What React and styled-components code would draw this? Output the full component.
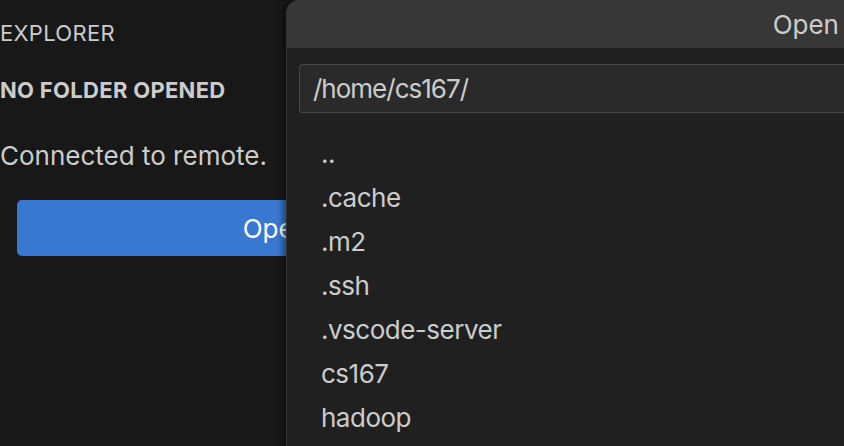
import React from 'react'
import styled, { createGlobalStyle } from 'styled-components'

const Global = createGlobalStyle`
html, body {
  margin: 0;
  padding: 0;
  background: #181818;
  font-family: Inter, "Noto Sans", "Liberation Sans", sans-serif;
}
#root {
  width: 844px;
  height: 446px;
  overflow: hidden;
}
`

const Screen = styled.div`
position: relative;
width: 844px;
height: 446px;
overflow: hidden;
background: #181818;
color: #cccccc;
`

const Sidebar = styled.div`
width: 636px;
display: flex;
flex-direction: column;
`

const PaneTitle = styled.div`
height: 66px;
display: flex;
align-items: center;
font-size: 22px;
letter-spacing: 0.3px;
color: #cccccc;
`

const SectionHeader = styled.div`
height: 48px;
display: flex;
align-items: center;
font-size: 22px;
font-weight: 700;
letter-spacing: 0.3px;
color: #cccccc;
`

const Message = styled.p`
margin: 24px 0 0 0;
font-size: 26px;
line-height: 36px;
color: #cccccc;
`

const PrimaryButton = styled.button`
margin: 26px 17px 0 17px;
height: 56px;
border: none;
border-radius: 5px;
background: #3878d0;
color: #ffffff;
font-family: inherit;
font-size: 26px;
`

const QuickInput = styled.div`
position: absolute;
top: 0;
left: 286px;
width: 1122px;
height: 520px;
background: #202020;
border: 1px solid #343434;
border-radius: 12px 12px 0 0;
box-shadow: -3px 0 6px rgba(0, 0, 0, 0.45);
overflow: hidden;
display: flex;
flex-direction: column;
`

const TitleBar = styled.div`
height: 47px;
flex-shrink: 0;
background: #373737;
display: flex;
align-items: center;
justify-content: center;
font-size: 26px;
color: #cccccc;
`

const Body = styled.div`
padding: 16px 12px 0 12px;
display: flex;
flex-direction: column;
`

const PathInput = styled.div`
height: 47px;
background: #2a2a2a;
border: 1px solid #474747;
border-radius: 3px;
display: flex;
align-items: center;
padding-left: 13px;
font-size: 26px;
letter-spacing: -1px;
color: #cccccc;
`

const List = styled.ul`
list-style: none;
margin: 19px 0 0 0;
padding: 0;
`

const Item = styled.li`
height: 44px;
line-height: 44px;
padding-left: 22px;
font-size: 26px;
letter-spacing: -0.5px;
color: #cccccc;
`

const entries = ['..', '.cache', '.m2', '.ssh', '.vscode-server', 'cs167', 'hadoop']

export default function App() {
  return (
    <Screen>
      <Global />
      <Sidebar>
        <PaneTitle>EXPLORER</PaneTitle>
        <SectionHeader>NO FOLDER OPENED</SectionHeader>
        <Message>Connected to remote.</Message>
        <PrimaryButton>Open Folder</PrimaryButton>
      </Sidebar>
      <QuickInput>
        <TitleBar>Open Folder</TitleBar>
        <Body>
          <PathInput>/home/cs167/</PathInput>
          <List>
            {entries.map(name => (
              <Item key={name}>{name}</Item>
            ))}
          </List>
        </Body>
      </QuickInput>
    </Screen>
  )
}
